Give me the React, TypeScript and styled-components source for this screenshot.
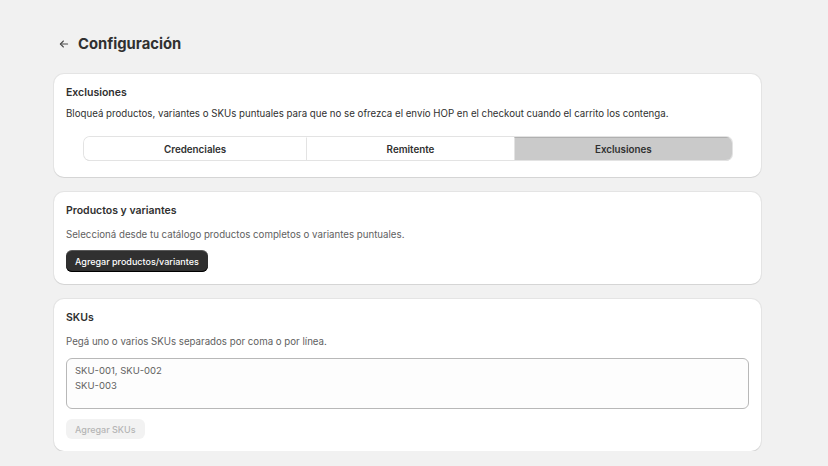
import * as React from 'react';
import styled, { createGlobalStyle } from 'styled-components';

const GlobalStyle = createGlobalStyle`
  body {
    margin: 0;
    background: #f1f1f1;
    font-family: Inter, 'Noto Sans', sans-serif;
    color: #303030;
  }
`;

const Page = styled.div`
  width: 707px;
  padding: 33px 0 0 54px;
  display: flex;
  flex-direction: column;
  gap: 15px;
`;

const Header = styled.div`
  display: flex;
  align-items: center;
  gap: 4px;
  height: 22px;
  margin-bottom: 4px;
`;

const BackButton = styled.button`
  display: flex;
  align-items: center;
  justify-content: center;
  width: 20px;
  height: 20px;
  padding: 0;
  border: none;
  background: transparent;
  color: #4a4a4a;
  cursor: pointer;
`;

const PageTitle = styled.h1`
  margin: 0;
  font-size: 14.8px;
  font-weight: 700;
  color: #303030;
`;

const Card = styled.section`
  background: #ffffff;
  border-radius: 10px;
  box-shadow: 0 1px 0 0 rgba(26, 26, 26, 0.07), 0 0 0 1px rgba(0, 0, 0, 0.05);
  padding: 12px;
  display: flex;
  flex-direction: column;
`;

const CardTitle = styled.h2`
  margin: 0;
  font-size: 10.5px;
  font-weight: 600;
  line-height: 13px;
  color: #303030;
`;

const CardText = styled.p<{ $muted?: boolean }>`
  margin: ${(p) => (p.$muted ? '11px' : '8px')} 0 0 0;
  font-size: 9.7px;
  line-height: 14px;
  color: ${(p) => (p.$muted ? '#616161' : '#303030')};
`;

const Tabs = styled.div`
  display: flex;
  margin: 16px 17px 5px 18px;
  height: 23px;
  border-radius: 6px;
  box-shadow: 0 0 0 1px #e3e3e3, 0 1px 0 0 #cfcfcf;
  overflow: hidden;
`;

const Tab = styled.button<{ $active?: boolean; $grow: number }>`
  flex: ${(p) => p.$grow} 1 0;
  border: none;
  border-left: 1px solid #e3e3e3;
  border-top: 1px solid ${(p) => (p.$active ? '#b0b0b0' : 'transparent')};
  background: ${(p) => (p.$active ? '#cacaca' : '#ffffff')};
  font-family: inherit;
  font-size: 9.8px;
  font-weight: 600;
  color: #303030;
  padding: 0;
  cursor: pointer;

  &:first-child {
    border-left: none;
  }
`;

const PrimaryButton = styled.button`
  align-self: flex-start;
  margin-top: 8px;
  height: 22px;
  padding: 0 9px;
  border: none;
  border-radius: 6px;
  background: #303030;
  box-shadow: inset 0 -1px 0 0 #000, inset 0 1px 0 0 rgba(255, 255, 255, 0.2);
  color: #ffffff;
  font-family: inherit;
  font-size: 9px;
  font-weight: 500;
  cursor: pointer;
`;

const DisabledButton = styled.button`
  align-self: flex-start;
  margin-top: 10px;
  height: 20px;
  padding: 0 9px;
  border: none;
  border-radius: 6px;
  background: #f2f2f2;
  color: #b5b5b5;
  font-family: inherit;
  font-size: 9px;
  font-weight: 500;
`;

const TextArea = styled.textarea`
  margin-top: 9px;
  height: 51px;
  box-sizing: border-box;
  padding: 4px 8px;
  border: 1px solid #b8b8b8;
  border-radius: 6px;
  background: #fdfdfd;
  font-family: inherit;
  font-size: 9.5px;
  line-height: 15px;
  color: #616161;
  resize: none;
  outline: none;
`;

const ArrowLeft = () => (
  <svg width="12" height="12" viewBox="0 0 20 20" fill="none" stroke="currentColor" strokeWidth="1.8" strokeLinecap="round" strokeLinejoin="round">
    <path d="M16 10H4" />
    <path d="M9 5l-5 5 5 5" />
  </svg>
);

const tabs = [
  { label: 'Credenciales', grow: 223 },
  { label: 'Remitente', grow: 207 },
  { label: 'Exclusiones', grow: 218 },
];

const App = () => {
  return (
    <>
      <GlobalStyle />
      <Page>
        <Header>
          <BackButton aria-label="Volver">
            <ArrowLeft />
          </BackButton>
          <PageTitle>Configuración</PageTitle>
        </Header>

        <Card>
          <CardTitle>Exclusiones</CardTitle>
          <CardText>
            Bloqueá productos, variantes o SKUs puntuales para que no se ofrezca el envío HOP en el checkout cuando el carrito los contenga.
          </CardText>
          <Tabs>
            {tabs.map((t) => (
              <Tab key={t.label} $grow={t.grow} $active={t.label === 'Exclusiones'}>
                {t.label}
              </Tab>
            ))}
          </Tabs>
        </Card>

        <Card>
          <CardTitle>Productos y variantes</CardTitle>
          <CardText $muted>Seleccioná desde tu catálogo productos completos o variantes puntuales.</CardText>
          <PrimaryButton>Agregar productos/variantes</PrimaryButton>
        </Card>

        <Card>
          <CardTitle>SKUs</CardTitle>
          <CardText $muted>Pegá uno o varios SKUs separados por coma o por línea.</CardText>
          <TextArea defaultValue={'SKU-001, SKU-002\nSKU-003'} />
          <DisabledButton disabled>Agregar SKUs</DisabledButton>
        </Card>
      </Page>
    </>
  );
};

export default App;
